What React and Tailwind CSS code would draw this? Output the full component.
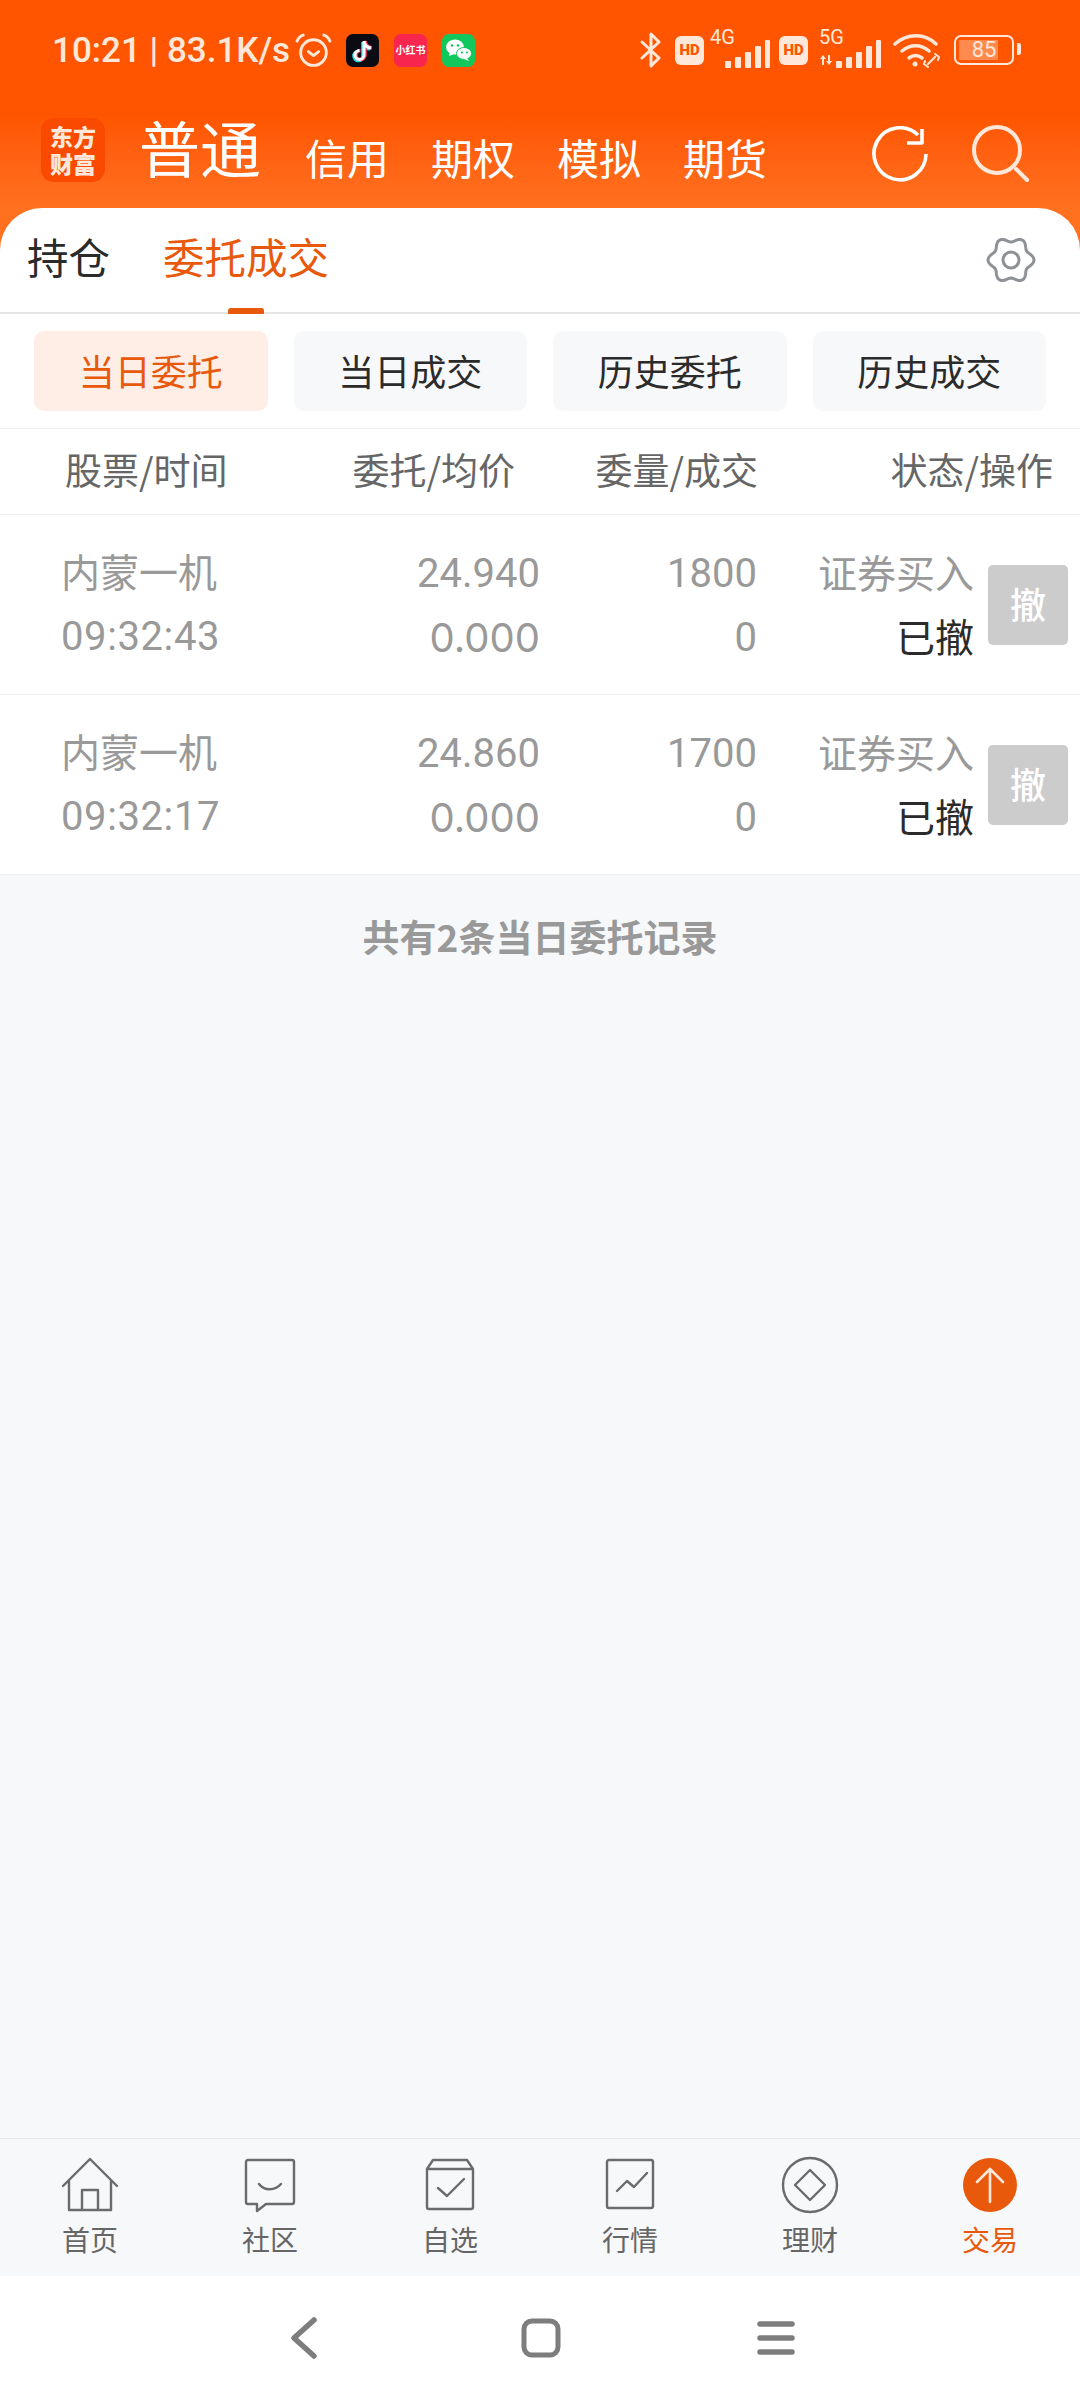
const cjk = { fontFamily: '"Noto Sans CJK SC", sans-serif' };
const num = { fontFamily: 'Roboto, "Noto Sans CJK SC", sans-serif' };
const wide = { fontFamily: 'Inter, "Noto Sans CJK SC", sans-serif' };

const filters = ["当日委托", "当日成交", "历史委托", "历史成交"];
const orders = [
  { name: "内蒙一机", time: "09:32:43", price: "24.940", avg: "0.000", qty: "1800", done: "0" },
  { name: "内蒙一机", time: "09:32:17", price: "24.860", avg: "0.000", qty: "1700", done: "0" },
];

// six soft lobes, same outline as the settings gear
const gearPath = Array.from({ length: 72 }, (_, i) => {
  const a = (i / 72) * Math.PI * 2;
  const r = 20.5 + 2.5 * Math.cos(6 * a);
  return `${i === 0 ? "M" : "L"}${(25 + r * Math.cos(a)).toFixed(2)} ${(25 + r * Math.sin(a)).toFixed(2)}`;
}).join("") + "Z";

function Signal() {
  return (
    <g fill="#ffe8d9">
      <rect x="0" y="21" width="6" height="7" rx="1" />
      <rect x="10" y="17" width="6" height="11" rx="1" />
      <rect x="20" y="12" width="6" height="16" rx="1" />
      <rect x="30" y="6" width="6" height="22" rx="1" />
      <rect x="40" y="0" width="5" height="28" rx="1" />
    </g>
  );
}

function Hd() {
  return (
    <span className="flex h-[29px] w-[29px] items-center justify-center rounded-[6px] bg-[#ffe8d9] text-[15px] leading-none font-black text-[#ff5500]" style={num}>HD</span>
  );
}

function StatusBar() {
  return (
    <div className="flex h-[100px] items-center pl-[52px] pr-[66px] text-[#ffe8d9]">
      <span className="text-[35px] leading-none font-medium whitespace-nowrap" style={num}>10:21 | 83.1K/s</span>
      <svg className="ml-[5px]" width="37" height="37" viewBox="0 0 36 36" fill="none" stroke="#ffe8d9" strokeWidth="2.8" strokeLinecap="round" strokeLinejoin="round">
        <circle cx="18" cy="20" r="12.5" />
        <path d="M13 19l5 4 5-4M2 9c1-3 3-5 6-6M34 9c-1-3-3-5-6-6" />
      </svg>
      <svg className="ml-[14px]" width="33" height="33" viewBox="0 0 33 33">
        <rect width="33" height="33" rx="7" fill="#0b0b14" />
        <path d="M18 7v14a4.5 4.5 0 1 1-4.5-4.5M18 7c.5 4 3 6.500 7 7" fill="none" stroke="#25e0e6" strokeWidth="3.600" transform="translate(-1 1)" />
        <path d="M18 7v14a4.500 4.500 0 1 1-4.500-4.500M18 7c.5 4 3 6.500 7 7" fill="none" stroke="#f5345f" strokeWidth="3.600" transform="translate(1 0)" />
        <path d="M18 7v14a4.500 4.500 0 1 1-4.500-4.500M18 7c.5 4 3 6.500 7 7" fill="none" stroke="#fff" strokeWidth="3" />
      </svg>
      <span className="ml-[15px] flex h-[33px] w-[33px] items-center justify-center rounded-[7px] bg-[#f8254e] text-[10px] leading-none font-bold whitespace-nowrap text-white" style={cjk}>小红书</span>
      <svg className="ml-[15px]" width="33" height="33" viewBox="0 0 33 33">
        <rect width="33" height="33" rx="7" fill="#12c85c" />
        <ellipse cx="13" cy="13" rx="9" ry="7.500" fill="#fff" />
        <path d="M8 18l-1 4 5-2z" fill="#fff" />
        <ellipse cx="22" cy="19.500" rx="7.500" ry="6" fill="#fff" stroke="#12c85c" strokeWidth="1" />
        <path d="M25 24l2 3-5-2z" fill="#fff" />
        <circle cx="10" cy="11.500" r="1.300" fill="#12c85c" />
        <circle cx="16" cy="11.500" r="1.300" fill="#12c85c" />
        <circle cx="20" cy="18.500" r="1.100" fill="#12c85c" />
        <circle cx="25" cy="18.500" r="1.100" fill="#12c85c" />
      </svg>

      <div className="ml-auto flex items-center">
        <svg width="24" height="36" viewBox="0 0 24 36" fill="none" stroke="#ffe8d9" strokeWidth="3" strokeLinejoin="round" strokeLinecap="round">
          <path d="M3 10l17 16-8 8V2l8 8L3 26" />
        </svg>
        <span className="ml-[12px]"><Hd /></span>
        <div className="relative ml-[6px] h-[36px] w-[60px]">
          <span className="absolute left-0 top-[-5px] text-[20px] leading-none" style={num}>4G</span>
          <svg className="absolute bottom-0 right-0" width="45" height="28" viewBox="0 0 45 28"><Signal /></svg>
        </div>
        <span className="ml-[9px]"><Hd /></span>
        <div className="relative ml-[11px] h-[36px] w-[62px]">
          <span className="absolute left-0 top-[-5px] text-[20px] leading-none" style={num}>5G</span>
          <svg className="absolute bottom-[2px] left-0" width="14" height="12" viewBox="0 0 14 12" fill="#ffe8d9"><path d="M1 5l3-4 3 4H5v6H3V5zM7 7h2V1h2v6h2l-3 4z" /></svg>
          <svg className="absolute bottom-0 right-0" width="45" height="28" viewBox="0 0 45 28"><Signal /></svg>
        </div>
        <svg className="ml-[12px]" width="48" height="36" viewBox="0 0 48 36" fill="none" stroke="#ffe8d9" strokeLinecap="round">
          <path d="M2 12c12-11 30-11 41 0" strokeWidth="3.500" />
          <path d="M9 19c8-7 19-7 27 0" strokeWidth="3.500" />
          <path d="M16 26c4-3 9-3 13 0" strokeWidth="3.500" />
          <circle cx="22" cy="32" r="2.500" fill="#ffe8d9" stroke="none" />
          <path d="M35 32l7-7M32 29l-1 3 4 3M45 28l1-3-4-3" strokeWidth="2" />
        </svg>
        <div className="relative ml-[13px] flex h-[30px] w-[60px] items-center rounded-[7px] border-[2.500px] border-[#ffe8d9] p-[3px]">
          <div className="h-full w-[77%] bg-[#ff8a4d]" />
          <span className="absolute inset-0 flex items-center justify-center text-[22px] leading-none" style={num}>85</span>
          <span className="absolute right-[-9px] top-[6px] h-[12px] w-[4px] rounded-r-[2px] bg-[#ffe8d9]" />
        </div>
      </div>
    </div>
  );
}

function TopBar() {
  return (
    <div className="flex h-[108px] items-center pb-[8px] pl-[41px] pr-[50px] text-white" style={cjk}>
      <div className="flex h-[64px] w-[64px] items-center justify-center rounded-[13px] bg-[#f94a00] text-center text-[23px] leading-[27px] font-black text-[#ffe8d9]">
        <span className="w-[47px] break-all">东方财富</span>
      </div>
      <span className="mb-[8px] ml-[34px] text-[61px] leading-none">普通</span>
      <div className="ml-[44px] mt-[14px] flex gap-[42px] text-[42px] leading-none">
        <span>信用</span>
        <span>期权</span>
        <span>模拟</span>
        <span>期货</span>
      </div>
      <svg className="ml-auto mt-[8px]" width="56" height="56" viewBox="0 0 56 56" fill="none" stroke="#fff" strokeWidth="3.600" strokeLinejoin="round">
        <path d="M46 9A26 26 0 1 0 54 28" />
        <path d="M50 3v14H35" />
      </svg>
      <svg className="ml-[44px] mt-[8px]" width="58" height="58" viewBox="0 0 58 58" fill="none" stroke="#ffe8d9" strokeWidth="4" strokeLinecap="round">
        <circle cx="25" cy="25" r="23" />
        <path d="M44 44l11 11" />
      </svg>
    </div>
  );
}

function Tabs() {
  return (
    <div className="bg-[#ff701f]">
      <div className="flex h-[106px] items-center rounded-t-[42px] border-b-2 border-[#e4e5e7] bg-white pl-[27px] pr-[44px] text-[41.500px] leading-none" style={cjk}>
        <span className="mb-[6px] text-[#2b2b2b]">持仓</span>
        <div className="relative ml-[53px] flex h-full items-center text-[#e8590c]">
          <span className="mb-[6px]">委托成交</span>
          <span className="absolute bottom-[-2px] left-[65px] h-[6px] w-[36px] rounded-t-[3px] bg-[#e8590c]" />
        </div>
        <svg className="ml-auto" width="50" height="50" viewBox="0 0 50 50" fill="none" stroke="#8e9296" strokeWidth="3" strokeLinejoin="round">
          <path d={gearPath} />
          <circle cx="25" cy="25" r="8" />
        </svg>
      </div>
    </div>
  );
}

function Filters() {
  return (
    <div className="grid h-[115px] grid-cols-4 items-center gap-[26px] border-b border-[#f0f1f3] bg-white px-[34px]" style={cjk}>
      {filters.map((label, i) => (
        <div key={label} className={i === 0 ? "flex h-[80px] items-center justify-center rounded-[10px] bg-[#ffeee6] pb-[2px] text-[36px] leading-none text-[#e8590c]" : "flex h-[80px] items-center justify-center rounded-[10px] bg-[#f7f8fa] pb-[2px] text-[36px] leading-none text-[#2b2b2b]"}>
          {label}
        </div>
      ))}
    </div>
  );
}

function TableHead() {
  return (
    <div className="flex h-[86px] items-center border-b border-[#eeeff1] bg-white pb-[5px] text-[37px] leading-none text-[#666666]" style={cjk}>
      <span className="w-[290px] pl-[65px]">股票/时间</span>
      <span className="w-[225px] text-right">委托/均价</span>
      <span className="w-[243px] text-right">委量/成交</span>
      <span className="w-[295px] text-right">状态/操作</span>
    </div>
  );
}

function OrderRow({ order }) {
  return (
    <div className="flex h-[180px] items-center border-b border-[#f0f1f3] bg-white text-[40px] leading-[64px] text-[#999999] last:border-b-0" style={num}>
      <div className="flex w-[260px] flex-col pl-[61px]">
        <span className="mb-[3px] mt-[-3px] text-[39px] whitespace-nowrap" style={cjk}>{order.name}</span>
        <span className="tracking-[0.6px]">{order.time}</span>
      </div>
      <div className="flex w-[280px] flex-col pt-[3px] text-right">
        <span>{order.price}</span>
        <span style={wide}>{order.avg}</span>
      </div>
      <div className="flex w-[217px] flex-col pt-[3px] text-right">
        <span>{order.qty}</span>
        <span>{order.done}</span>
      </div>
      <div className="flex w-[217px] flex-col pb-[3px] text-right text-[39px]" style={cjk}>
        <span>证券买入</span>
        <span className="text-[#2b2b2b]">已撤</span>
      </div>
      <div className="ml-[14px] flex h-[80px] w-[80px] items-center justify-center rounded-[5px] bg-[#cccccc] pb-[4px] text-[36px] leading-none font-medium text-white" style={cjk}>撤</div>
    </div>
  );
}

function NavIcon({ name }) {
  const common = { width: 60, height: 60, viewBox: "0 0 60 60", fill: "none", stroke: "#6b6b6b", strokeWidth: 2.4, strokeLinejoin: "round", strokeLinecap: "round" };
  if (name === "home") return <svg {...common}><path d="M3 31L30 4l27 27M9 26v29h42V26M22 55V35h16v20" /></svg>;
  if (name === "chat") return <svg {...common}><path d="M8 5h44a2 2 0 0 1 2 2v40a2 2 0 0 1-2 2H26l-9 7v-7H8a2 2 0 0 1-2-2V7a2 2 0 0 1 2-2z" /><path d="M19 29c5 7 16 7 22 0" /></svg>;
  if (name === "pick") return <svg {...common}><path d="M7 14l6-9h34l6 9M7 14h46v38a2 2 0 0 1-2 2H9a2 2 0 0 1-2-2z" /><path d="M18 33l9 8 17-17" /></svg>;
  if (name === "market") return <svg {...common}><rect x="7" y="5" width="46" height="48" rx="2" /><path d="M17 36l10-10 7 6 13-14" /></svg>;
  if (name === "finance") return <svg {...common}><circle cx="30" cy="30" r="27" /><path d="M30 15l15 15-15 15-15-15z" /></svg>;
  return (
    <svg width="60" height="60" viewBox="0 0 60 60" fill="none" stroke="#ffe8d9" strokeWidth="2.600" strokeLinecap="round" strokeLinejoin="round">
      <circle cx="30" cy="30" r="27" fill="#e8590c" stroke="none" />
      <path d="M30 47V14M17 27l13-13 13 13" />
    </svg>
  );
}

const navItems = [
  { label: "首页", icon: "home" },
  { label: "社区", icon: "chat" },
  { label: "自选", icon: "pick" },
  { label: "行情", icon: "market" },
  { label: "理财", icon: "finance" },
  { label: "交易", icon: "trade" },
];

function BottomNav() {
  return (
    <div className="grid h-[138px] grid-cols-6 border-t border-[#e4e5e7] bg-[#f7f8fa] pt-[16px]" style={cjk}>
      {navItems.map((item) => (
        <div key={item.label} className="flex flex-col items-center">
          <NavIcon name={item.icon} />
          <span className={item.icon === "trade" ? "mt-[10px] text-[28px] leading-none text-[#e8590c]" : "mt-[10px] text-[28px] leading-none text-[#666666]"}>{item.label}</span>
        </div>
      ))}
    </div>
  );
}

function SystemNav() {
  return (
    <div className="flex h-[124px] items-center justify-center gap-[196px] bg-white">
      <svg width="40" height="44" viewBox="0 0 40 44" fill="none" stroke="#7d7d7d" strokeWidth="5.500" strokeLinecap="round" strokeLinejoin="round"><path d="M29 4L9 22l20 18" /></svg>
      <svg width="40" height="40" viewBox="0 0 40 40" fill="none" stroke="#7d7d7d" strokeWidth="5"><rect x="3" y="3" width="34" height="34" rx="8" /></svg>
      <svg width="38" height="38" viewBox="0 0 38 38" fill="none" stroke="#7d7d7d" strokeWidth="5.500" strokeLinecap="round"><path d="M3 5h32M3 19h32M3 33h32" /></svg>
    </div>
  );
}

export default function App() {
  return (
    <div className="flex h-[2400px] w-[1080px] flex-col bg-[#f7f8fa]">
      <div className="bg-gradient-to-b from-[#ff5500] from-[55%] to-[#ff701f]">
        <StatusBar />
        <TopBar />
      </div>
      <Tabs />
      <Filters />
      <TableHead />
      {orders.map((order) => <OrderRow key={order.time} order={order} />)}
      <div className="flex-1 pt-[43px] text-center text-[37px] leading-none font-bold text-[#999999]" style={cjk}>共有2条当日委托记录</div>
      <BottomNav />
      <SystemNav />
    </div>
  );
}
